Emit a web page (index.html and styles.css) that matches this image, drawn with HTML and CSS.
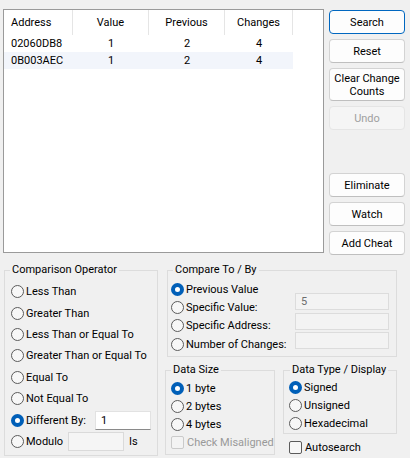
FILE: index.html
```html
<!DOCTYPE html>
<html>
<head>
<meta charset="utf-8">
<link rel="stylesheet" href="styles.css">
</head>
<body>
<div class="app">
  <div class="top">
    <div class="list">
      <div class="lrow head">
        <div class="c c1">Address</div>
        <div class="c c2">Value</div>
        <div class="c c3">Previous</div>
        <div class="c c4">Changes</div>
      </div>
      <div class="lrow">
        <div class="c c1">02060DB8</div>
        <div class="c c2">1</div>
        <div class="c c3">2</div>
        <div class="c c4">4</div>
      </div>
      <div class="lrow alt">
        <div class="c c1">0B003AEC</div>
        <div class="c c2">1</div>
        <div class="c c3">2</div>
        <div class="c c4">4</div>
      </div>
    </div>
    <div class="buttons">
      <button class="btn default">Search</button>
      <button class="btn">Reset</button>
      <button class="btn tall">Clear Change<br>Counts</button>
      <button class="btn disabled">Undo</button>
      <button class="btn push">Eliminate</button>
      <button class="btn">Watch</button>
      <button class="btn">Add Cheat</button>
    </div>
  </div>

  <div class="bottom">
    <fieldset class="grp cmp">
      <legend>Comparison Operator</legend>
      <div class="opt"><span class="radio"></span>Less Than</div>
      <div class="opt"><span class="radio"></span>Greater Than</div>
      <div class="opt"><span class="radio"></span>Less Than or Equal To</div>
      <div class="opt"><span class="radio"></span>Greater Than or Equal To</div>
      <div class="opt"><span class="radio"></span>Equal To</div>
      <div class="opt"><span class="radio"></span>Not Equal To</div>
      <div class="opt"><span class="radio on"></span><span class="lbl-diff">Different By:</span><span class="tb tb-live">1</span></div>
      <div class="opt"><span class="radio"></span><span class="lbl-mod">Modulo</span><span class="tb tb-off"></span><span class="is">Is</span></div>
    </fieldset>

    <div class="right">
      <fieldset class="grp cto">
        <legend>Compare To / By</legend>
        <div class="cto-in">
          <div class="cto-opts">
            <div class="opt"><span class="radio on"></span>Previous Value</div>
            <div class="opt"><span class="radio"></span>Specific Value:</div>
            <div class="opt"><span class="radio"></span>Specific Address:</div>
            <div class="opt"><span class="radio"></span>Number of Changes:</div>
          </div>
          <div class="cto-tbs">
            <span class="tb tb-dis">5</span>
            <span class="tb tb-dis"></span>
            <span class="tb tb-dis"></span>
          </div>
        </div>
      </fieldset>

      <div class="lower">
        <fieldset class="grp dsize">
          <legend>Data Size</legend>
          <div class="opt"><span class="radio on"></span>1 byte</div>
          <div class="opt"><span class="radio"></span>2 bytes</div>
          <div class="opt"><span class="radio"></span>4 bytes</div>
          <div class="opt dis"><span class="check"></span>Check Misaligned</div>
        </fieldset>
        <div class="dtcol">
          <fieldset class="grp dtype">
            <legend>Data Type / Display</legend>
            <div class="opt"><span class="radio on"></span>Signed</div>
            <div class="opt"><span class="radio"></span>Unsigned</div>
            <div class="opt"><span class="radio"></span>Hexadecimal</div>
          </fieldset>
          <div class="opt auto"><span class="check"></span>Autosearch</div>
        </div>
      </div>
    </div>
  </div>
</div>
</body>
</html>
```
FILE: styles.css
```css
* { box-sizing: border-box; }
html, body { margin: 0; padding: 0; }
body {
  background: #f0f0f0;
  font-family: Roboto, "Liberation Sans", sans-serif;
  font-size: 11px;
  color: #000;
  width: 410px;
  height: 458px;
  overflow: hidden;
}
.app { padding-top: 9px; }

/* ---------- top: list + buttons ---------- */
.top { display: flex; height: 246px; padding-left: 3px; }
.list {
  width: 321px;
  height: 244px;
  border: 1px solid #9a9a9a;
  background: #fff;
}
.lrow { display: flex; width: 289px; height: 17px; align-items: center; }
.lrow.head { height: 25px; }
.lrow.alt { background: #f2f5fb; }
.c { text-align: center; white-space: nowrap; }
.c1 { width: 69px; text-align: left; padding-left: 7px; }
.c2, .c3 { width: 76px; }
.c4 { width: 68px; }
.head .c {
  height: 100%;
  display: flex;
  align-items: center;
  justify-content: center;
  border-right: 1px solid #e5e5e5;
}
.head .c1 { justify-content: flex-start; }

.buttons {
  display: flex;
  flex-direction: column;
  gap: 5px;
  margin-left: 5px;
  margin-top: 1px;
  width: 76px;
  height: 245px;
}
.btn {
  height: 24px;
  flex: none;
  border: 1px solid #d3d3d3;
  border-bottom-color: #bfbfbf;
  border-radius: 4px;
  background: #fdfdfd;
  font: inherit;
  color: #000;
  padding: 0;
  line-height: 13px;
}
.btn.tall { height: 33px; }
.btn.default { border-color: #0067c0; }
.btn.disabled { background: #f5f5f5; border-color: #e5e5e5; color: #a0a0a0; }
.btn.push { margin-top: auto; }

/* ---------- bottom groups ---------- */
.bottom { display: flex; margin-top: 8px; padding-left: 4px; }
.grp {
  margin: 0;
  padding: 0;
  border: 1px solid #dcdcdc;
  min-width: 0;
}
.grp legend {
  padding: 0 2px;
  line-height: 14px;
  height: 14px;
}
.opt { display: flex; align-items: center; white-space: nowrap; }
.radio {
  width: 13px;
  height: 13px;
  border-radius: 50%;
  border: 1px solid #5b5b5b;
  background: #f7f7f7;
  flex: none;
  margin-right: 2px;
}
.radio.on { border: 4px solid #005fb8; background: #fff; }
.check {
  width: 13px;
  height: 13px;
  border: 1px solid #5b5b5b;
  border-radius: 2px;
  background: #f7f7f7;
  flex: none;
  margin-right: 3px;
}
.dis { color: #999; }
.dis .check { border-color: #cacaca; background: #f3f3f3; }

.tb {
  display: flex;
  align-items: center;
  height: 19px;
  padding-left: 5px;
  border: 1px solid #e2e2e2;
}
.tb-live { background: #fff; border-bottom-color: #8a8a8a; width: 56px; }
.tb-off { background: #f5f5f5; border-color: #dadada; width: 56px; }
.tb-dis { background: #f3f3f3; border-color: #dcdcdc; color: #6d6d6d; width: 94px; height: 17px; }

.cmp { width: 154px; height: 193px; padding: 4px 0 0 6px; }
.cmp legend { margin-left: -1px; }
.cmp .opt { height: 21.4px; }
.lbl-diff { width: 69px; }
.lbl-mod { width: 42px; }
.is { margin-left: 5px; }

.right { margin-left: 7px; }
.cto { width: 230px; height: 94px; margin-left: 2px; padding: 3px 0 0 3px; }
.cto legend { margin-left: 2px; }
.cto-in { display: flex; }
.cto-opts .opt { height: 18.3px; }
.cto-tbs {
  display: flex;
  flex-direction: column;
  gap: 2.5px;
  margin-left: auto;
  margin-right: 7px;
  margin-top: 13px;
}

.lower { display: flex; margin-top: 6px; }
.dsize { width: 110px; height: 92px; padding: 2px 0 0 5px; }
.dsize legend { margin-left: 0; }
.dsize .opt { height: 18px; }
.dtcol { margin-left: 8px; }
.dtype { width: 114px; height: 71px; padding: 1px 0 0 5px; }
.dtype legend { margin-left: 1px; }
.dtype .opt { height: 18px; }
.auto { height: 18px; margin-top: 4px; padding-left: 6px; }
```
